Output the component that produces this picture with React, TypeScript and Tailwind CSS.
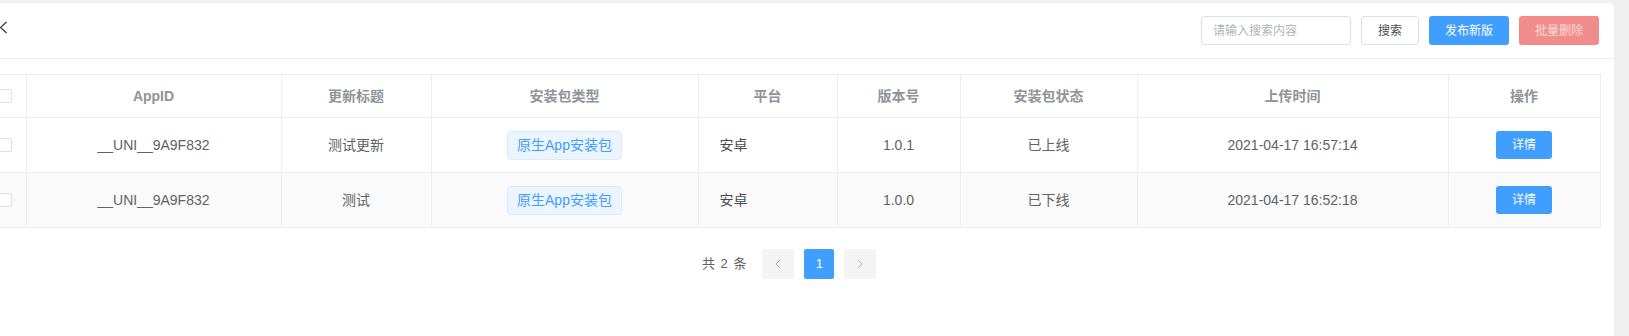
import { ChevronLeft, ChevronRight } from 'lucide-react';

const rows = [
  { appid: '__UNI__9A9F832', title: '测试更新', type: '原生App安装包', platform: '安卓', version: '1.0.1', status: '已上线', time: '2021-04-17 16:57:14' },
  { appid: '__UNI__9A9F832', title: '测试', type: '原生App安装包', platform: '安卓', version: '1.0.0', status: '已下线', time: '2021-04-17 16:52:18' },
];

const cols = [26, 255, 150, 267, 139, 123, 177, 311, 152];
const heads = ['AppID', '更新标题', '安装包类型', '平台', '版本号', '安装包状态', '上传时间', '操作'];

function Checkbox() {
  return <span className="block w-[14px] h-[14px] -ml-[2px] bg-white border border-[#dcdfe6] rounded-[2px]" />;
}

export default function App() {
  return (
    <div className="w-[1629px] h-[336px] overflow-hidden bg-[#f0f0f0] pt-[3px] pr-[15px] text-[14px] text-[#606266]"
      style={{ fontFamily: '"Liberation Sans", "Noto Sans CJK SC", sans-serif' }}>
      <div className="bg-white h-full rounded-tr-[6px]">
        {/* Header */}
        <div className="h-[56px] flex items-center justify-between border-b border-[#ebeef5] pr-[15px]">
          <svg width="8" height="14" viewBox="0 0 8 14" className="-mt-[6px]">
            <path d="M6.5 1 L0.5 6.5 L6.5 12" fill="none" stroke="#303133" strokeWidth="1.2" />
          </svg>
          <div className="flex items-center gap-[10px] text-[12px]">
            <input placeholder="请输入搜索内容"
              className="w-[150px] h-[29px] border border-[#dcdfe6] rounded-[4px] px-[11px] outline-none placeholder:text-[#b0b3b9] text-[12px]" />
            <button className="w-[58px] h-[29px] border border-[#dcdfe6] rounded-[3px] text-[#4a4d52] bg-white">搜索</button>
            <button className="w-[80px] h-[29px] rounded-[3px] bg-[#409eff] text-white">发布新版</button>
            <button className="w-[80px] h-[29px] rounded-[3px] bg-[#f08c8c] text-[#fcdada]">批量删除</button>
          </div>
        </div>

        {/* Table */}
        <div className="pt-[15px] pr-[14px]">
          <table className="table-fixed border-collapse w-[1600px]">
            <colgroup>
              {cols.map((w, i) => <col key={i} style={{ width: w }} />)}
            </colgroup>
            <thead>
              <tr className="h-[43px] border-t border-[#ebeef5]">
                <th className="border-r border-[#ebeef5]"><Checkbox /></th>
                {heads.map(h => (
                  <th key={h} className="font-bold text-[#909399] text-center border-r border-[#ebeef5]">{h}</th>
                ))}
              </tr>
            </thead>
            <tbody>
              {rows.map((r, i) => (
                <tr key={i} className={`h-[55px] border-t border-b border-[#ebeef5] ${i === 1 ? 'bg-[#fafafa]' : 'bg-white'}`}>
                  <td className="border-r border-[#ebeef5]"><Checkbox /></td>
                  <td className="border-r border-[#ebeef5] text-center">{r.appid}</td>
                  <td className="border-r border-[#ebeef5] text-center">{r.title}</td>
                  <td className="border-r border-[#ebeef5] text-center">
                    <span className="inline-flex items-center h-[29px] px-[9px] bg-[#ecf5ff] border border-[#d9ecff] rounded-[4px] text-[#409eff]">{r.type}</span>
                  </td>
                  <td className="border-r border-[#ebeef5] pl-[21px] text-[#4a4a4a]">{r.platform}</td>
                  <td className="border-r border-[#ebeef5] text-center">{r.version}</td>
                  <td className="border-r border-[#ebeef5] text-center">{r.status}</td>
                  <td className="border-r border-[#ebeef5] text-center">{r.time}</td>
                  <td className="border-r border-[#ebeef5] text-center">
                    <button className="w-[56px] h-[28px] rounded-[3px] bg-[#409eff] text-white text-[12px]">详情</button>
                  </td>
                </tr>
              ))}
            </tbody>
          </table>
        </div>

        {/* Pagination */}
        <div className="flex items-center mt-[21px] pl-[702px] text-[13px]">
          <span className="text-[#606266] tracking-[1px] mr-[15px]">共 2 条</span>
          <button className="w-[32px] h-[30px] flex items-center justify-center bg-[#f4f4f5] text-[#b4b7bd] rounded-[2px]">
            <ChevronLeft size={16} strokeWidth={1.5} />
          </button>
          <button className="w-[30px] h-[30px] mx-[10px] flex items-center justify-center bg-[#409eff] text-white rounded-[2px]">1</button>
          <button className="w-[32px] h-[30px] flex items-center justify-center bg-[#f4f4f5] text-[#b4b7bd] rounded-[2px]">
            <ChevronRight size={16} strokeWidth={1.5} />
          </button>
        </div>
      </div>
    </div>
  );
}
